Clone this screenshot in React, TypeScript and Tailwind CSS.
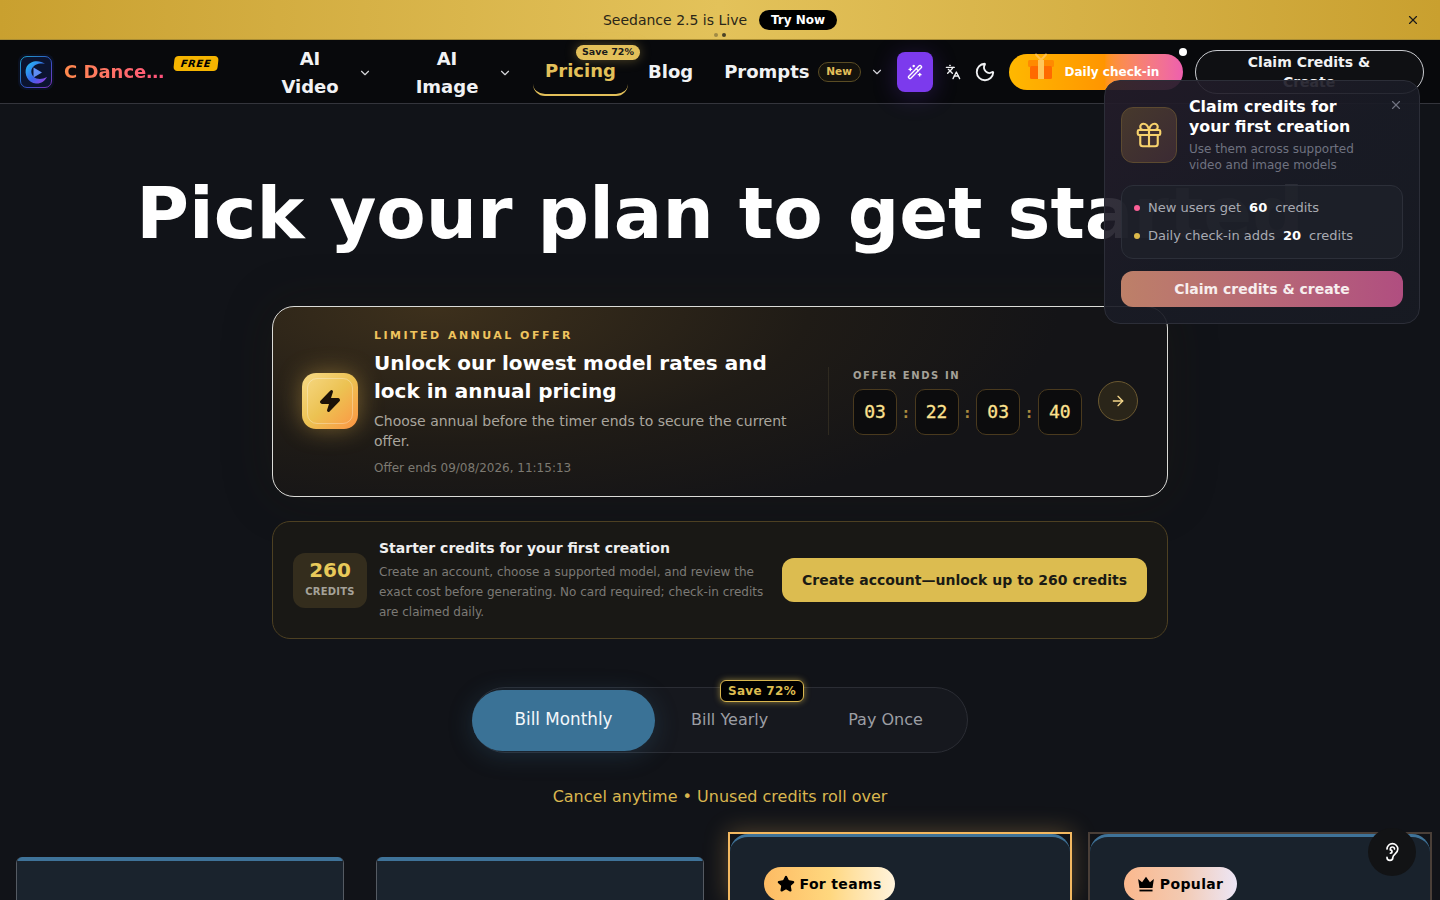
import React from "react";
import { ArrowRight, ChevronDown, Ear, Gift, Languages, Moon, Star, WandSparkles, X, Zap } from "lucide-react";

function Logo() {
  return (
    <div className="flex h-9 w-9 shrink-0 items-center justify-center rounded-lg bg-[#0a1020]">
      <svg viewBox="0 0 36 36" className="h-9 w-9" fill="none">
        <defs>
          <linearGradient id="logoRing" x1="0" y1="0" x2="1" y2="1">
            <stop offset="0" stopColor="#22c8f5" />
            <stop offset="0.55" stopColor="#3a63ea" />
            <stop offset="1" stopColor="#a23be0" />
          </linearGradient>
        </defs>
        <rect x="2.5" y="2.5" width="31" height="31" rx="6.5" fill="#0b1430" stroke="url(#logoRing)" strokeWidth="0.8" />
        <path d="M27 10C21.5 5.5 12 6.5 8.5 13C5.5 20 10 29 18 29.5C23 29.8 27 27 29 23C25.5 25 21.5 25.5 18.5 24.5C14 23 12.2 18 14 14.5C16 10.5 22 8.5 27 10Z" fill="url(#logoRing)" />
        <path d="M15.5 13.5L24 18.5L15.5 23.5Z" fill="#5f8df5" />
      </svg>
    </div>
  );
}

function GiftArt() {
  return (
    <svg viewBox="0 0 28 28" className="h-7 w-7" fill="none">
      <path d="M14 8L9 2.5M14 8L19 2.5" stroke="#ffc04d" strokeWidth="2" strokeLinecap="round" />
      <rect x="1" y="8" width="26" height="7" rx="1.5" fill="#ff8a00" />
      <rect x="3" y="14" width="22" height="13" rx="1.5" fill="#ff6a00" />
      <rect x="11" y="8" width="6" height="19" fill="#ffc65c" />
    </svg>
  );
}

function CrownBar() {
  return (
    <svg viewBox="0 0 16 16" className="h-[18px] w-[18px]" fill="#000">
      <path d="M1 3.5L4.5 6.5L8 1.5L11.5 6.5L15 3.5L13.8 11.5H2.2Z" />
      <rect x="2.2" y="13" width="11.6" height="1.6" />
    </svg>
  );
}

function TimeBox({ value }: { value: string }) {
  return (
    <div className="flex h-[46px] w-11 items-center justify-center rounded-[10px] border border-[#4a3a1e] bg-[#0c0c0d] font-['DejaVu_Sans_Mono',monospace] text-lg text-[#fde28f] [-webkit-text-stroke:0.3px_#fde28f]">
      {value}
    </div>
  );
}

function Colon() {
  return <span className="flex w-[17.6px] justify-center pt-0.5 text-sm font-bold text-[#a98b3f]">:</span>;
}

function PlanCard({ badge }: { badge?: React.ReactNode }) {
  return (
    <div className="h-full rounded-t-[18px] border-t-[3px] border-[#3f7399] bg-[#19222c] px-[33.6px] pt-[30px]">{badge}</div>
  );
}

export default function App() {
  return (
    <div className="relative h-[900px] w-[1440px] overflow-hidden bg-[#111318] font-['DejaVu_Sans',sans-serif] text-white">
      {/* Banner */}
      <div className="relative flex h-10 items-center justify-center gap-3 border-b border-[#a98c33] bg-gradient-to-r from-[#c9a02f] via-[#e3c25a] to-[#c9a02f]">
        <span className="text-sm text-[#2a2618]">Seedance 2.5 is Live</span>
        <span className="flex h-5 w-[78px] items-center justify-center rounded-full bg-black text-xs font-bold text-white">Try Now</span>
        <div className="absolute bottom-0.5 left-[714px] flex gap-1">
          <span className="h-1 w-1 rounded-full bg-[#a08a45]" />
          <span className="h-1 w-1 rounded-full bg-[#4a4226]" />
        </div>
        <X className="absolute left-[1406px] top-[13px] h-3.5 w-3.5 text-[#1a1a1a]" strokeWidth={2} />
      </div>

      {/* Nav */}
      <nav className="flex h-16 items-center border-b border-[#34353c] bg-[#08090c] pl-[18px] [&>*]:shrink-0">
        <Logo />
        <span className="ml-2.5 w-[100px] bg-gradient-to-r from-[#ff8a4c] to-[#ff4f7b] bg-clip-text text-lg font-bold whitespace-nowrap text-transparent">C Dance…</span>
        <span className="mb-4 ml-2.5 flex h-[15px] w-11 -skew-x-6 items-center justify-center rounded-[4px] bg-[#f5b400] text-[10px] font-bold italic tracking-wider text-black">FREE</span>

        <div className="ml-[45px] flex w-[130px] items-center pt-[2px]">
          <span className="w-[94px] text-center text-lg leading-7 font-bold text-[#f1f2f4]">AI<br />Video</span>
          <ChevronDown className="ml-px h-3.5 w-3.5 text-[#d5d6da]" />
        </div>
        <div className="ml-[7px] flex w-[130px] items-center pt-[2px]">
          <span className="w-[94px] text-center text-lg leading-7 font-bold text-[#f1f2f4]">AI<br />Image</span>
          <ChevronDown className="ml-1 h-3.5 w-3.5 text-[#d5d6da]" />
        </div>

        <div className="relative ml-[3px] flex h-12 w-[95px] items-center justify-center rounded-b-xl border-b-2 border-[#e3c05a] text-lg font-bold text-[#e3c05a]">
          Pricing
          <span className="absolute left-[43px] top-[-3px] flex h-[15px] w-16 items-center justify-center rounded-full bg-[#e3c05a] text-[9.5px] font-bold whitespace-nowrap text-[#1a1a1a] shadow-[0_0_12px_rgba(227,192,90,0.35)]">Save 72%</span>
        </div>
        <span className="ml-5 text-lg font-bold text-[#f1f2f4]">Blog</span>
        <span className="ml-[31px] text-lg font-bold text-[#f1f2f4]">Prompts</span>
        <span className="ml-2 flex h-5 w-[43px] items-center justify-center rounded-full border border-[#5a4c24] bg-[#14120c] text-[10.5px] font-bold text-[#e3c05a]">New</span>
        <ChevronDown className="ml-[9px] h-3.5 w-3.5 text-[#d5d6da]" />
        <div className="ml-[13px] flex h-10 w-9 items-center justify-center rounded-lg bg-[#7c3aed] shadow-[0_4px_24px_rgba(124,58,237,0.25)]">
          <WandSparkles className="h-4 w-4 text-white" />
        </div>
        <Languages className="ml-3 h-4 w-4 text-[#f1f2f4]" />
        <Moon className="ml-[13px] h-[22px] w-[22px] text-[#f1f2f4]" />
        <div className="relative ml-[13px] flex h-9 w-[174px] items-center rounded-full bg-gradient-to-r from-[#ffb800] via-[#ff9500] via-55% to-[#ee5fae] pl-14 text-xs font-bold whitespace-nowrap">
          <span className="absolute left-[18px] top-[-2px]"><GiftArt /></span>
          Daily check-in
          <span className="absolute -top-[6px] right-[-4px] h-2 w-2 rounded-full bg-white" />
        </div>
        <div className="ml-3 h-11 w-[229px] rounded-[22px] border border-[#c9cbd0] bg-[#0f1013] px-6 pt-px text-center text-sm leading-5 font-bold text-[#f1f2f4]">
          Claim Credits &amp; Create
        </div>
      </nav>

      {/* Popover */}
      <div className="absolute left-[1104px] top-20 z-20 h-[244px] w-[316px] rounded-2xl border border-[#2c2e38] bg-gradient-to-br from-[#241c2a]/90 via-[#191b25]/92 to-[#171a22]/95 px-4 pt-4">
        <X className="absolute right-4 top-[17px] h-3.5 w-3.5 text-[#6f7280]" />
        <div className="flex gap-3">
          <div className="mt-2.5 flex h-14 w-14 shrink-0 items-center justify-center rounded-xl border border-[#5c4a30] bg-gradient-to-br from-[#47392c] to-[#3b2a33]">
            <Gift className="h-[30px] w-[30px] text-[#f7d26c]" strokeWidth={1.7} />
          </div>
          <div>
            <p className="w-[180px] text-[15.8px] leading-5 font-bold text-white">Claim credits for your first creation</p>
            <p className="mt-1 w-[190px] text-xs leading-4 text-[#6f7280]">Use them across supported video and image models</p>
          </div>
        </div>
        <div className="mt-3 rounded-xl border border-[#2c2f39] bg-[#1e2029]/80 px-3 pt-3 text-[13px] text-[#a9abb3]">
          <div className="flex h-5 items-center gap-2">
            <span className="h-1.5 w-1.5 rounded-full bg-[#fb5f96]" />
            <span>New users get</span>
            <b className="text-white">60</b>
            <span>credits</span>
          </div>
          <div className="mt-2 mb-3 flex h-5 items-center gap-2">
            <span className="h-1.5 w-1.5 rounded-full bg-[#dcb94a]" />
            <span>Daily check-in adds</span>
            <b className="text-white">20</b>
            <span>credits</span>
          </div>
        </div>
        <div className="mt-3 flex h-9 items-center justify-center rounded-xl bg-gradient-to-r from-[#bd8068] to-[#b04e80] text-sm font-bold text-[#f7eeee]">
          Claim credits &amp; create
        </div>
      </div>

      {/* Main */}
      <main className="flex flex-col items-center">
        <h1 className="mt-[69px] text-center text-7xl leading-20 font-bold whitespace-nowrap text-white">Pick your plan to get started</h1>

        {/* Offer card */}
        <section className="mt-[53px] flex h-[191px] w-[896px] items-center rounded-[22px] border border-[#dcdcd8] bg-[radial-gradient(ellipse_70%_120%_at_18%_0%,#3d301c,#1f1b16_60%,#141417)] pb-[2px] pl-[29px] shadow-[0_0_50px_rgba(40,30,10,0.25)]">
          <div className="relative flex h-14 w-14 shrink-0 items-center justify-center rounded-[14px] bg-gradient-to-br from-[#f7da85] via-[#ecc252] to-[#fb9343] shadow-[0_0_24px_rgba(240,190,80,0.4)]">
            <div className="absolute inset-[5px] rounded-[10px] border border-white/30" />
            <Zap className="h-6 w-6 fill-[#1c1208] text-[#1c1208]" />
          </div>
          <div className="ml-4 mt-[3px] w-[430px]">
            <p className="text-[11px] leading-4 font-bold tracking-[0.225em] text-[#efc45e]">LIMITED ANNUAL OFFER</p>
            <h2 className="mt-[5px] text-xl leading-7 font-bold text-white">Unlock our lowest model rates and lock in annual pricing</h2>
            <p className="mt-1.5 text-sm leading-5 text-[#aaa69e]">Choose annual before the timer ends to secure the current offer.</p>
            <p className="mt-[9px] text-xs leading-4 text-[#7d7a72]">Offer ends 09/08/2026, 11:15:13</p>
          </div>
          <div className="ml-6 h-[68px] w-px bg-[#2f2a20]" />
          <div className="ml-6 mt-px">
            <p className="pt-px text-[10px] leading-4 font-bold tracking-[0.16em] text-[#a5a299]">OFFER ENDS IN</p>
            <div className="mt-[5px] flex items-center">
              <TimeBox value="03" />
              <Colon />
              <TimeBox value="22" />
              <Colon />
              <TimeBox value="03" />
              <Colon />
              <TimeBox value="40" />
            </div>
          </div>
          <div className="ml-4 flex h-10 w-10 items-center justify-center rounded-full border border-[#6a5830] bg-[#2a2519]">
            <ArrowRight className="h-4 w-4 text-[#f4d68a]" />
          </div>
        </section>

        {/* Starter credits */}
        <section className="mt-6 flex h-[118px] w-[896px] items-center rounded-[18px] border border-[#4d4022] bg-[#191815] pl-5">
          <div className="flex h-[55px] w-[74px] shrink-0 flex-col items-center justify-center rounded-xl bg-[#342d1d] pb-[2px]">
            <span className="text-xl leading-6 font-bold text-[#e8c95a]">260</span>
            <span className="mt-0.5 text-[10px] leading-4 font-bold tracking-wide text-[#a5a299]">CREDITS</span>
          </div>
          <div className="ml-3 w-[390px]">
            <p className="text-sm leading-5 font-bold text-[#efefef]">Starter credits for your first creation</p>
            <p className="mt-1 text-xs leading-5 text-[#7c7a75]">Create an account, choose a supported model, and review the exact cost before generating. No card required; check-in credits are claimed daily.</p>
          </div>
          <div className="ml-[13px] flex h-11 w-[365px] items-center justify-center rounded-xl bg-[#dcbc50] text-sm font-bold text-[#1a1a14]">
            Create account—unlock up to 260 credits
          </div>
        </section>

        {/* Billing toggle */}
        <div className="relative mt-12 flex h-[66px] w-[496px] items-center rounded-full border border-[#2b2d34] bg-[#16181e]">
          <div className="-ml-px flex h-[61px] w-[183px] items-center justify-center rounded-full bg-[#3a7296] pb-px text-[16.8px] text-[#f3f7fa] shadow-[0_4px_24px_rgba(58,114,150,0.25)]">Bill Monthly</div>
          <span className="ml-9 text-base text-[#9c9ea4]">Bill Yearly</span>
          <span className="ml-20 text-base text-[#9c9ea4]">Pay Once</span>
          <span className="absolute left-[247px] top-[-8px] flex h-[22px] w-[84px] items-center justify-center rounded-md border border-[#d9b64f] bg-black text-xs font-bold tracking-wide text-[#dcbc50] shadow-[0_0_6px_rgba(220,188,80,0.6)]">Save 72%</span>
        </div>
        <p className="mt-8 text-base leading-6 text-[#d9b64f]">Cancel anytime • Unused credits roll over</p>

        {/* Plans */}
        <div className="mt-[23px] flex h-[68px] w-full pl-4">
          <div className="mt-[25px] h-full w-[328px] overflow-hidden rounded-t-md border-x border-[#555b63]">
            <div className="h-full border-t-4 border-[#3f7399] bg-[#1a232d]" />
          </div>
          <div className="mt-[25px] ml-8 h-full w-[328px] overflow-hidden rounded-t-md border-x border-[#555b63]">
            <div className="h-full border-t-4 border-[#3f7399] bg-[#1a232d]" />
          </div>
          <div className="ml-6 h-full w-[344px] border-2 border-b-0 border-[#f3b860] shadow-[0_0_24px_rgba(243,184,96,0.3)]">
            <PlanCard
              badge={
                <span className="flex h-[34px] w-[131px] items-center justify-center gap-[5px] rounded-full bg-gradient-to-r from-[#fdbb63] via-[#ffd77e] to-[#fff3dc] text-sm font-bold tracking-wide text-black">
                  <Star className="h-[18px] w-[18px] fill-black text-black" />
                  For teams
                </span>
              }
            />
          </div>
          <div className="ml-4 h-full w-[344px] border-2 border-b-0 border-[#4a3f38]">
            <PlanCard
              badge={
                <span className="flex h-[34px] w-[113px] items-center justify-center gap-[5px] rounded-full bg-gradient-to-r from-[#fbb88d] via-[#f3c9b0] to-[#ece6f6] text-sm font-bold tracking-wide text-black">
                  <CrownBar />
                  Popular
                </span>
              }
            />
          </div>
        </div>
      </main>

      {/* Floating accessibility button */}
      <div className="absolute left-[1368px] top-[828px] z-30 flex h-12 w-12 items-center justify-center rounded-full bg-[#121315]">
        <Ear className="h-5 w-5 text-white" />
      </div>
    </div>
  );
}
